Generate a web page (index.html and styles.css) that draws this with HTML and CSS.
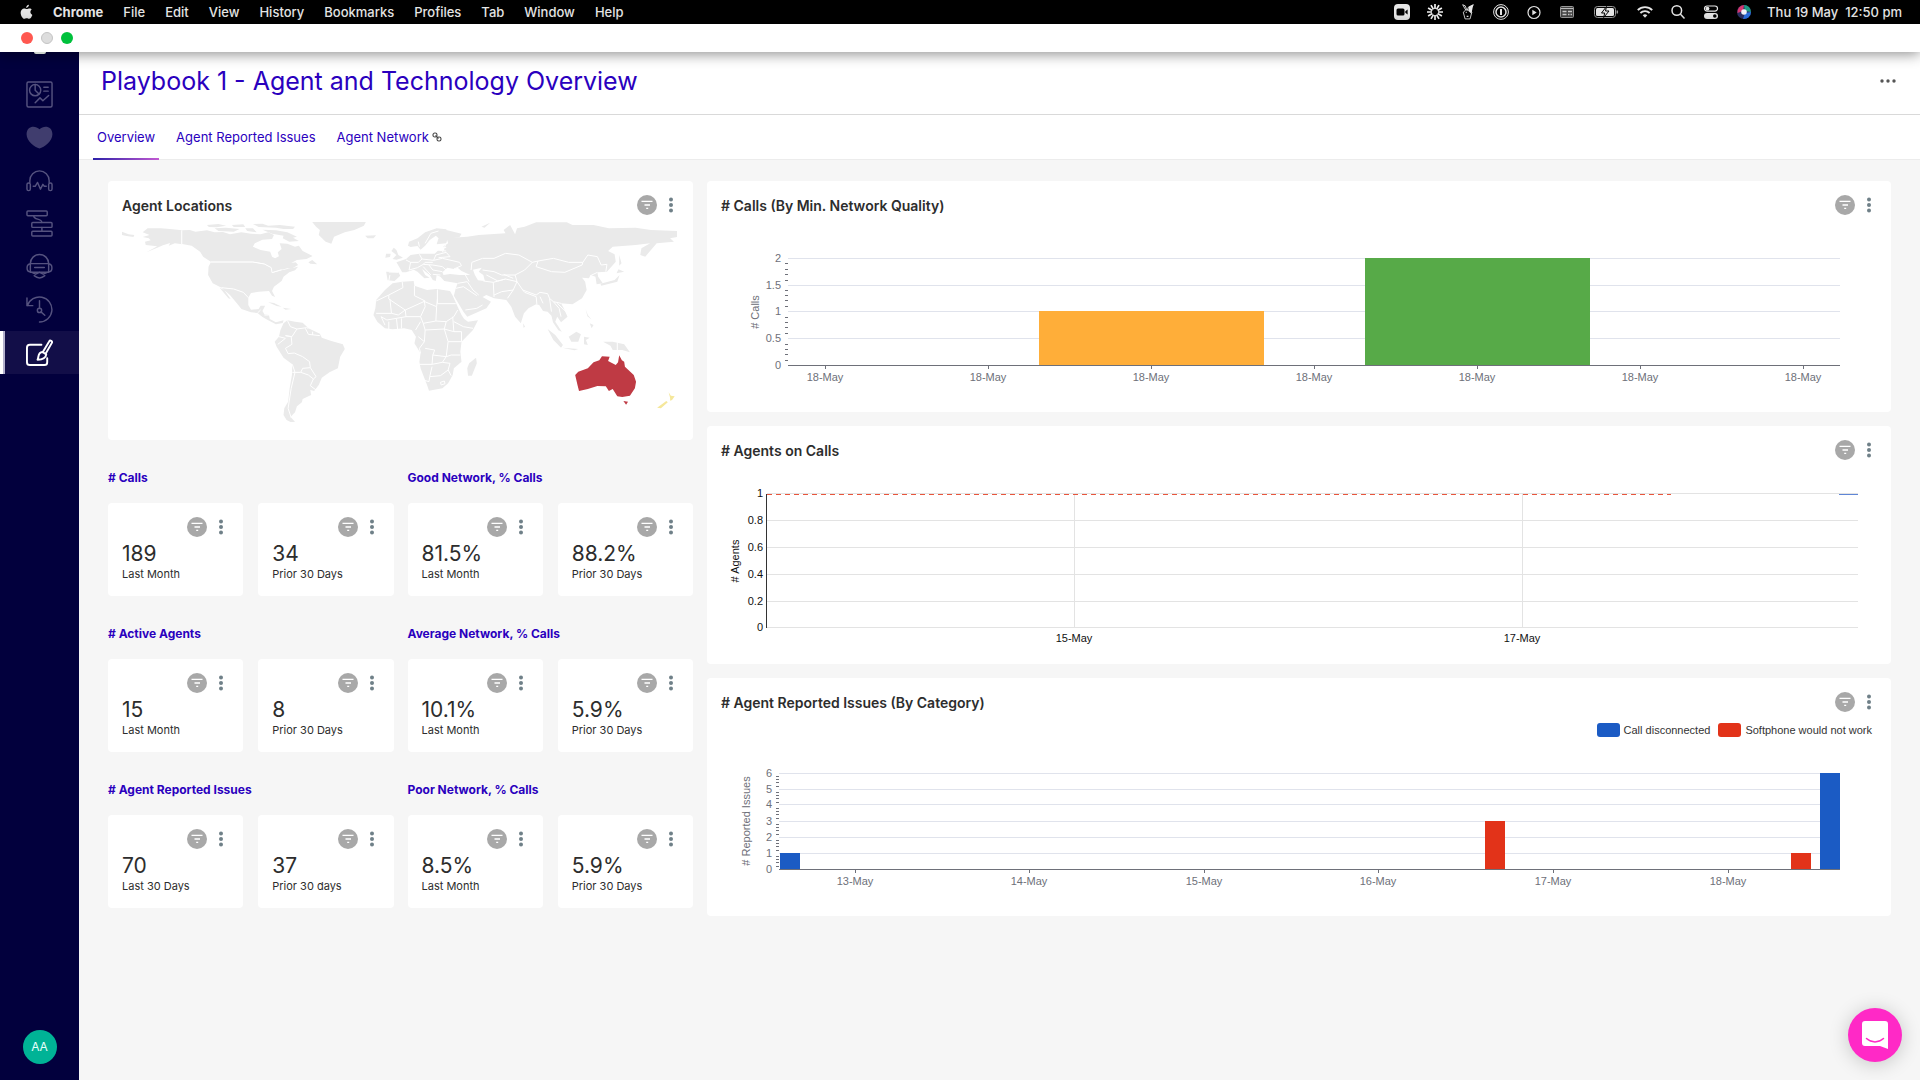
FILE: index.html
```html
<!DOCTYPE html>
<html lang="en">
<head>
<meta charset="utf-8">
<title>Playbook 1 - Agent and Technology Overview</title>
<meta name="viewport" content="width=device-width, initial-scale=1">
<link rel="stylesheet" href="styles.css">
</head>
<body>
<svg class="defs" aria-hidden="true">
  <symbol id="filter" viewBox="0 0 20 20"><circle cx="10" cy="10" r="10" fill="#a8a8a8"/><path d="M4.500 6.300h11M7.500 10h5.500M9.200 13.300h2" stroke="#fff" stroke-width="1.300"/></symbol>
  <symbol id="dots" viewBox="0 0 6 20"><g fill="#6f8088"><circle cx="3" cy="4.500" r="2"/><circle cx="3" cy="10" r="2"/><circle cx="3" cy="15.500" r="2"/></g></symbol>
</svg>

<header class="menubar">
  <svg class="apple" viewBox="0 0 14 16" aria-label="Apple"><path fill="#e6e6e6" d="M9.600.3c.1 1.700-1.300 3.200-2.900 3.300C6.500 2 8 .5 9.600.3zM12.700 5.400c-2.300 1.500-1.800 4.700.6 5.700-.7 1.900-2 4.300-3.500 4.300-1 0-1.400-.6-2.600-.6s-1.600.6-2.600.6C2.800 15.400.7 11.900.7 8.900c0-3 1.900-4.700 3.800-4.700 1.200 0 2 .7 2.800.7.900 0 1.800-.8 3.200-.8.900 0 1.700.5 2.200 1.300z"/></svg>
  <nav class="menus">
    <b>Chrome</b><span>File</span><span>Edit</span><span>View</span><span>History</span><span>Bookmarks</span><span>Profiles</span><span>Tab</span><span>Window</span><span>Help</span>
  </nav>
  <div class="status">
    <svg viewBox="0 0 16 16"><rect width="16" height="16" rx="4" fill="#e6e6e6"/><rect x="2.500" y="4.500" width="8" height="7" rx="1.500"/><path d="M11.300 7.200l2.300-1.700v5l-2.300-1.700z"/></svg>
    <svg viewBox="0 0 16 16"><path d="M8 0v5M8 11v5M0 8h5M11 8h5M4 1.100l2.500 4.300M9.500 10.600l2.500 4.300M12 1.100L9.500 5.400M6.500 10.600L4 14.900M1.100 4l4.300 2.500M10.600 9.500l4.300 2.500M1.100 12l4.300-2.500M10.600 6.500L14.900 4" stroke="#f0f0f0" stroke-width="1.700"/></svg>
    <svg viewBox="0 0 16 18"><path d="M2 .8l3.500 6-2.800 2.400 2 7.600h5.600l2-7.600-1.700-3L14 .8 8.500 3.500 7 7.500 4.800 2z" fill="none" stroke="#e6e6e6"/><path d="M14 .6L9 3l-.8 4.500L11.800 11z" fill="#e6e6e6"/><path d="M5.500 9.500h1M6.500 14h2" stroke="#e6e6e6" stroke-width="1.500"/></svg>
    <svg viewBox="0 0 16 16"><g fill="none" stroke="#e6e6e6"><circle cx="8" cy="8" r="7.400"/><circle cx="8" cy="8" r="5" stroke-width="1.500"/></g><path d="M8 5v6" stroke="#e6e6e6" stroke-width="2"/></svg>
    <svg viewBox="0 0 16 16"><circle cx="8" cy="8.500" r="6" fill="none" stroke="#e6e6e6" stroke-width="1.200"/><path d="M6.300 5.800l4.400 2.700-4.400 2.700z" fill="#e6e6e6"/></svg>
    <svg viewBox="0 0 16 16"><rect x="1.500" y="2.500" width="13" height="11" rx="1" fill="#444" stroke="#999"/><path d="M2 4.500h12" stroke="#bbb"/><path d="M3.500 7.500h4M3.500 10.500h4M9 7.500h4M9 10.500h1.500M11.500 10.500h1.500" stroke="#c8c8c8" stroke-width="1.600"/></svg>
    <svg class="battery" viewBox="0 0 28 16"><rect x="2.500" y="2.500" width="21" height="11" rx="3" fill="none" stroke="#999"/><rect x="4" y="4" width="18" height="8" rx="1.500" fill="#e6e6e6"/><path d="M14.500 2.500L9.500 9h3.200l-1 4.500L17 7h-3.500z" fill="#e6e6e6" stroke="#000"/><path d="M25.300 6.500v3" stroke="#999" stroke-width="1.500"/></svg>
    <svg viewBox="0 0 16 16"><g fill="none" stroke="#e6e6e6" stroke-width="1.900"><path d="M.8 6.100a10.300 10.300 0 0 1 14.400 0M3.400 9a6.600 6.600 0 0 1 9.200 0"/></g><path d="M5.700 11.300a3.300 3.300 0 0 1 4.600 0L8 13.700z" fill="#e6e6e6"/></svg>
    <svg viewBox="0 0 16 16"><g fill="none" stroke="#e6e6e6" stroke-width="1.500"><circle cx="6.800" cy="6.500" r="4.800"/><path d="M10.300 10l4.200 4.400"/></g></svg>
    <svg viewBox="0 0 16 16"><rect x="1.500" y="2" width="13" height="5.200" rx="2.600" fill="none" stroke="#e6e6e6" stroke-width="1.200"/><circle cx="4.500" cy="4.600" r="1.900" fill="#e6e6e6"/><rect x="1" y="9" width="14" height="6" rx="3" fill="#e6e6e6"/><circle cx="11.800" cy="12" r="1.800"/></svg>
    <svg viewBox="0 0 16 16"><circle cx="8" cy="8" r="7" fill="#2b2f63"/><path d="M1.500 9A7 7 0 0 1 8 1l-1 6z" fill="#d5366f"/><path d="M8 1a7 7 0 0 1 7 7L9 7z" fill="#1d9a83"/><path d="M15 8a7 7 0 0 1-8 7l2-6z" fill="#2b6fe0"/><circle cx="8" cy="8" r="2.800" fill="#f2f4fb"/></svg>
  </div>
  <time class="clock">Thu 19 May&nbsp; 12:50 pm</time>
</header>

<div class="titlebar">
  <button class="light red" aria-label="Close"></button><button class="light gray" aria-label="Minimise"></button><button class="light green" aria-label="Zoom"></button>
</div>

<div class="app">
  <aside class="sidebar">
    <span class="logo"></span>
    <nav class="side-nav">
      <a href="#" aria-label="Reports"><svg viewBox="0 0 28 28"><rect x="1" y="1" width="26" height="26" rx="1.500"/><circle cx="9.500" cy="9.500" r="5.800"/><path d="M9.500 3.700v5.800l4 4M18.500 6.500h4.500M18.500 10.500h4.500M9.500 22.500l5-5 3 3 6-5.500"/></svg></a>
      <a href="#" aria-label="Health"><svg viewBox="0 0 28 28"><path class="solid" d="M14 25.500C9 23.500.6 18 .6 10.500.6 2 9.500.8 14 5.500 18.500.8 27.400 2 27.400 10.500 27.400 18 19 23.500 14 25.500z"/></svg></a>
      <a href="#" aria-label="Calls"><svg viewBox="0 0 28 28"><path d="M4 16v-2a10 10 0 0 1 20 0v2"/><rect x="1" y="16.500" width="3.500" height="8" rx="1.700"/><rect x="23.500" y="16.500" width="3.500" height="8" rx="1.700"/><path d="M7.500 20h2l2.500-4 3 7 2.500-5 1.500 2h2"/></svg></a>
      <a href="#" aria-label="Flows"><svg viewBox="0 0 28 28"><rect x="1" y="1" width="21" height="5" rx="1"/><rect x="6" y="13" width="21" height="5" rx="1"/><rect x="6" y="22" width="21" height="5" rx="1"/><path d="M8 6c0 5 8 2 8.500 7M16.500 18v4"/></svg></a>
      <a href="#" aria-label="Agents"><svg viewBox="0 0 28 28"><path d="M4.500 11a9.500 9.500 0 0 1 19 0"/><rect x="4.500" y="11" width="19" height="9"/><path d="M9 15h10M4.500 11.500c-4.500 0-4.500 8 0 8M23.500 11.500c4.500 0 4.500 8 0 8M6 20l4 2 4-2 4 2 4-2M8.500 23.500c3.500 3 7.500 3 11 0"/></svg></a>
      <a href="#" aria-label="History"><svg viewBox="0 0 28 28"><path d="M1 2v8h6M1.500 10A13 13 0 1 1 14 27M14 5v8"/><circle cx="14" cy="15" r="2.200"/><path d="M15.500 16.500l4 3.500"/></svg></a>
      <a href="#" aria-label="Playbooks" class="active"><svg viewBox="0 0 28 28"><path d="M16 6H4a3 3 0 0 0-3 3v15a3 3 0 0 0 3 3h15a3 3 0 0 0 3-3v-4M17.500 13.500L24 2.500c1-1.800 3.800-.3 2.800 1.500L20.500 15M17 13.500c-5 .5-3.500 5-5 8 4.500 0 8.500-1 9-5.500z"/></svg></a>
    </nav>
    <span class="avatar">AA</span>
  </aside>

  <main class="main">
    <div class="page-head">
      <h1>Playbook 1 - Agent and Technology Overview</h1>
      <button class="more" aria-label="More"><svg viewBox="0 0 16 4"><g fill="#555"><circle cx="2" cy="2" r="1.700"/><circle cx="8" cy="2" r="1.700"/><circle cx="14" cy="2" r="1.700"/></g></svg></button>
    </div>
    <nav class="tabs">
      <a href="#" class="current">Overview</a>
      <a href="#">Agent Reported Issues</a>
      <a href="#">Agent Network <svg class="link" viewBox="0 0 10 10"><g fill="none" stroke="#444" stroke-width="1.100"><rect x="1" y="1" width="4" height="4" rx="1.800"/><rect x="5" y="5" width="4" height="4" rx="1.800"/><path d="M3.500 3.500l3 3"/></g></svg></a>
    </nav>

    <div class="board">
      <div class="left">
        <section class="card map-card">
          <div class="card-head"><h2>Agent Locations</h2><button aria-label="Filter"><svg class="f"><use href="#filter"/></svg></button><button aria-label="Options"><svg class="d"><use href="#dots"/></svg></button></div>
          <svg class="map" viewBox="58 141 1450 600" preserveAspectRatio="none" role="img" aria-label="World map with Australia and New Zealand highlighted">
            <g class="land">
              <path d="M58 170L75 178 90 180 88 186 70 183 58 180zM112 172L125 160 160 160 190 163 215 166V208L196 205 180 212 184 204 165 211 150 218 122 232 150 214 120 210 118 200 133 196 128 190 112 186 130 180z"/>
              <path d="M215 166L235 165 250 170 280 166 300 172 322 171 340 178 370 172 395 176 420 178 440 172 455 180 450 192 425 194 405 205 400 215 420 225 445 230 450 245 458 250 468 244 465 232 475 222 470 205 490 206 510 215 520 212 530 228 556 243 540 252 515 255 500 264 512 262 518 270 500 282 490 280 450 292 446 276 430 266 400 260 290 260 270 245 262 230 240 212 215 207z"/>
              <path d="M280 150L310 147 330 152 305 157 285 156zM300 160L330 158 365 162 350 170 310 168zM345 150L375 148 380 156 350 156zM380 160L400 160 410 172 385 168zM400 147L425 146 440 152 470 150 510 155 505 162 480 162 460 158 415 156zM425 164L460 166 490 172 515 185 505 188 520 198 495 200 478 190 480 182 450 176zM545 262L555 255 568 268 550 266z"/>
              <path d="M290 262H400L430 268 448 278 450 294 475 286 500 280 518 275 510 286 495 292 480 305 475 318 455 335 450 348 458 366 450 362 442 348 415 350 395 354 388 368 375 352 350 342 318 338 295 325 283 300 284 275z"/>
              <path d="M318 338L350 342 375 352 388 368 388 390 395 404 415 402 420 392 432 392 425 408 430 418 442 420 444 432 460 442 480 436 478 444 460 448 440 436 425 426 412 414 395 412 370 402 358 385 340 360zM313 338L325 345 342 372 336 370zM440 382L455 384 475 395 462 393zM478 398L500 402 485 404z"/>
              <path d="M555 141H695L690 152 665 165 640 172 612 185 605 206 590 200 572 180 575 165 565 155zM693 182L722 181 715 190 700 190z"/>
              <path d="M480 445L490 436 510 440 530 443 545 460 575 476 580 488 605 498 635 508 640 522 628 545 622 580 600 592 580 608 572 630 560 648 550 645 552 660 530 672 528 682 515 694 510 712 498 726 510 740 500 742 488 735 480 720 482 700 492 680 496 640 502 600 503 568 480 548 462 515 457 500 468 485 472 465z"/>
              <path d="M765 325L790 320 820 318 822 332 855 345 880 342 915 348 922 362 935 395 945 420 952 432 962 440 988 436 975 465 945 500 942 530 945 560 925 580 922 600 910 625 895 640 860 647 855 630 838 580 835 560 838 535 822 505 826 485 815 465 795 460 765 463 745 460 725 440 715 420 720 400 722 375 745 345zM983 548L985 565 972 602 962 602 960 580 965 565z"/>
              <path d="M748 290L780 292 785 302 770 318 752 316zM768 218L775 225 780 240 792 248 775 254 765 252 775 240 762 228zM748 236L760 236 758 246 746 248zM805 212L808 200 830 190 850 172 880 160 905 163 912 180 905 205 880 208 885 190 878 182 862 195 850 212 838 224 830 213 812 216z"/>
              <path d="M905 165L945 176 940 186 920 188 960 185 990 180 1020 178 1060 175 1055 165 1072 150 1085 178 1090 160 1110 155 1140 142H1220L1235 150 1290 150 1330 160 1400 158 1440 165 1508 168V186L1490 190 1500 200 1455 205 1440 225 1425 245 1412 240 1415 220 1438 205 1400 210 1340 215 1328 228 1345 238 1348 260 1325 290 1300 292 1302 305 1314 325 1298 328 1295 305 1282 300 1278 310 1260 308 1268 320 1272 345 1260 370 1235 388 1205 385 1212 400 1222 425 1205 442 1195 425 1190 440 1207 470 1198 466 1184 442 1180 422 1170 410 1158 408 1148 390 1140 388 1120 400 1108 415 1100 445 1085 425 1075 395 1062 375 1030 370 1010 360 1000 366 1022 380 1010 400 960 425 950 410 925 362 930 340 935 325 900 318 890 305 880 300 878 318 870 315 862 300 842 282 850 300 862 308 848 310 830 290 820 284 800 292 790 292 782 275 775 262 800 252 812 240 835 236 875 236 885 225 900 225 898 214 910 205 905 185z"/>
              <path d="M1355 283L1370 290 1350 295zM1358 300L1352 320 1310 332 1308 326 1345 315zM1357 240L1363 265 1357 272zM1170 462L1190 480 1210 510 1205 518 1185 495zM1208 518L1250 522 1240 526zM1225 485L1245 470 1257 478 1250 500 1232 500zM1265 485L1280 488 1270 495 1275 510 1265 508zM1269 402L1275 420 1285 434 1274 424zM1280 445L1290 450 1285 460zM1315 500L1340 500 1370 508 1385 532 1365 525 1340 525 1334 512zM1106 445L1111 455 1107 458zM997 155L1020 143 1005 158z"/>
            </g>
            <path class="sea" d="M895 292L908 278 925 282 935 278 945 288 968 300 940 300 915 297 898 300zM975 284L998 278 990 290 1002 300 1006 318 988 316 980 300z"/>
            <path class="borders" d="M214 166V208M290 261H400L430 267 448 278 450 293 475 284M318 338L350 342 375 352 388 368M412 414L420 405M430 420L442 420"/>
            <path class="borders" d="M490 436L498 455 515 462 502 485 485 482M515 462L540 458 545 460M537 460L545 478 575 482M556 470V480M468 485L485 490 465 508M500 485L502 508 485 520 492 536 508 534 530 545 548 560 550 578 565 605 558 612 545 600 525 592 503 592M503 568L510 592 500 640 492 700 500 728M550 578L530 580 525 592M558 612L550 632 565 645M485 482L500 485"/>
            <path class="borders" d="M790 320L792 338 755 360 722 378M755 360V372L798 405 850 378 822 362V332M882 343V386H930M882 372L880 395 845 378M758 372L762 415H722M762 415L780 420 798 405M798 405L800 425 775 430 750 435 735 425M800 425L838 425 850 395 848 380M838 425L845 445 878 438 880 395M825 465L838 440M878 438L905 440 925 425 935 405M905 440L900 462 925 470 922 425M925 440L950 455 975 460M845 445L850 465 900 462M850 465L848 500 835 520 838 535M848 500L832 485M850 520L875 525 870 540 905 545 910 500 900 462M910 500H945M925 470L945 470V500M870 540L868 568H835M868 568L895 562 905 545 918 540 942 540M868 575L862 605 860 620 845 615M862 605L890 602 910 585 915 565 895 562M910 585L918 602M775 430L778 462M755 440V463M788 430V460M735 425L745 450M890 622L900 618 902 626 892 630z"/>
            <path class="borders" d="M935 325L960 320 975 345 990 360M955 300L965 320M930 340L950 335 985 362M955 405L985 400 1000 390M1002 318L1028 322 1030 366M1028 322L1060 312 1090 320 1080 345 1050 350 1030 360M1080 345L1065 370M1090 320L1105 345 1140 360 1150 352 1170 356 1175 370 1185 380 1205 385M1105 345L1110 352 1140 365 1142 388M1150 365L1158 385M1175 370L1180 410M1185 380L1200 400 1205 425M1195 385L1218 410"/>
            <path class="borders" d="M970 285L972 262 1000 250 1030 250 1060 235 1095 240 1130 262 1145 258 1185 250 1225 262 1262 262 1275 240 1300 245 1310 270 1325 268 1322 290M1130 262L1110 285 1085 300 1090 320M1145 258L1140 275 1180 290 1215 292 1260 270 1262 262M1000 285L1030 290 1050 300 1085 300M1010 300L1040 318 1060 312M1055 298L1080 310M1282 302L1300 292"/>
            <path class="borders" d="M780 292L755 291M758 300L755 318M800 255L812 262 808 285 830 278 845 268 870 270 895 275 905 285M835 238L842 252 832 262 812 262M842 252L872 256 878 240M878 240L905 232 915 245 885 248M872 256L895 250 940 262 945 272 925 282M845 268L850 262 870 262M860 270L870 285 895 290M845 275L865 300M878 225L905 228M885 216L905 218M832 200L835 215M850 205L865 175 885 168M905 205L895 232M870 298L890 300"/>
            <path class="borders" d="M1352 502V525"/>
            <path fill="#bf3a44" d="M1242 600L1250 590 1275 580 1290 562 1305 556 1312 544 1332 545 1328 558 1348 570 1354 562 1357 541 1364 556 1370 560 1372 575 1395 600 1401 620 1398 640 1385 662 1365 666 1352 664 1340 642 1330 648 1322 634 1300 633 1275 642 1252 648 1248 630zM1368 678L1380 680 1375 689z"/>
            <path fill="#f5e79b" d="M1486 652L1492 662 1502 664 1495 675 1490 677 1490 668zM1480 678L1484 682 1466 700 1456 698z"/>
          </svg>
        </section>

        <div class="stats">
          <section class="group"><h3># Calls</h3><div class="pair">
            <article class="card stat"><div class="tools"><button aria-label="Filter"><svg class="f"><use href="#filter"/></svg></button><button aria-label="Options"><svg class="d"><use href="#dots"/></svg></button></div><strong>189</strong><span>Last Month</span></article>
            <article class="card stat"><div class="tools"><button aria-label="Filter"><svg class="f"><use href="#filter"/></svg></button><button aria-label="Options"><svg class="d"><use href="#dots"/></svg></button></div><strong>34</strong><span>Prior 30 Days</span></article>
          </div></section>
          <section class="group"><h3>Good Network, % Calls</h3><div class="pair">
            <article class="card stat"><div class="tools"><button aria-label="Filter"><svg class="f"><use href="#filter"/></svg></button><button aria-label="Options"><svg class="d"><use href="#dots"/></svg></button></div><strong>81.5%</strong><span>Last Month</span></article>
            <article class="card stat"><div class="tools"><button aria-label="Filter"><svg class="f"><use href="#filter"/></svg></button><button aria-label="Options"><svg class="d"><use href="#dots"/></svg></button></div><strong>88.2%</strong><span>Prior 30 Days</span></article>
          </div></section>
          <section class="group"><h3># Active Agents</h3><div class="pair">
            <article class="card stat"><div class="tools"><button aria-label="Filter"><svg class="f"><use href="#filter"/></svg></button><button aria-label="Options"><svg class="d"><use href="#dots"/></svg></button></div><strong>15</strong><span>Last Month</span></article>
            <article class="card stat"><div class="tools"><button aria-label="Filter"><svg class="f"><use href="#filter"/></svg></button><button aria-label="Options"><svg class="d"><use href="#dots"/></svg></button></div><strong>8</strong><span>Prior 30 Days</span></article>
          </div></section>
          <section class="group"><h3>Average Network, % Calls</h3><div class="pair">
            <article class="card stat"><div class="tools"><button aria-label="Filter"><svg class="f"><use href="#filter"/></svg></button><button aria-label="Options"><svg class="d"><use href="#dots"/></svg></button></div><strong>10.1%</strong><span>Last Month</span></article>
            <article class="card stat"><div class="tools"><button aria-label="Filter"><svg class="f"><use href="#filter"/></svg></button><button aria-label="Options"><svg class="d"><use href="#dots"/></svg></button></div><strong>5.9%</strong><span>Prior 30 Days</span></article>
          </div></section>
          <section class="group"><h3># Agent Reported Issues</h3><div class="pair">
            <article class="card stat"><div class="tools"><button aria-label="Filter"><svg class="f"><use href="#filter"/></svg></button><button aria-label="Options"><svg class="d"><use href="#dots"/></svg></button></div><strong>70</strong><span>Last 30 Days</span></article>
            <article class="card stat"><div class="tools"><button aria-label="Filter"><svg class="f"><use href="#filter"/></svg></button><button aria-label="Options"><svg class="d"><use href="#dots"/></svg></button></div><strong>37</strong><span>Prior 30 days</span></article>
          </div></section>
          <section class="group"><h3>Poor Network, % Calls</h3><div class="pair">
            <article class="card stat"><div class="tools"><button aria-label="Filter"><svg class="f"><use href="#filter"/></svg></button><button aria-label="Options"><svg class="d"><use href="#dots"/></svg></button></div><strong>8.5%</strong><span>Last Month</span></article>
            <article class="card stat"><div class="tools"><button aria-label="Filter"><svg class="f"><use href="#filter"/></svg></button><button aria-label="Options"><svg class="d"><use href="#dots"/></svg></button></div><strong>5.9%</strong><span>Prior 30 Days</span></article>
          </div></section>
        </div>
      </div>

      <div class="right">
        <section class="card">
          <div class="card-head"><h2># Calls (By Min. Network Quality)</h2><button aria-label="Filter"><svg class="f"><use href="#filter"/></svg></button><button aria-label="Options"><svg class="d"><use href="#dots"/></svg></button></div>
          <svg class="chart" viewBox="0 0 1184 190">
            <path class="grid" d="M81 36h1052M81 63h1052M81 89h1052M81 116h1052"/>
            <path class="tick" d="M78 41h3M78 47h3M78 52h3M78 58h3M78 68h3M78 73h3M78 78h3M78 84h3M78 95h3M78 100h3M78 105h3M78 111h3M78 122h3M78 127h3M78 132h3M78 138h3"/>
            <rect x="332" y="89" width="225" height="54" fill="#ffae39"/>
            <rect x="658" y="36" width="225" height="107" fill="#57aa48"/>
            <path class="axis" d="M81 143h1052M118 143v4M281 143v4M444 143v4M607 143v4M770 143v4M933 143v4M1096 143v4"/>
            <g class="y"><text x="74" y="40">2</text><text x="74" y="67">1.5</text><text x="74" y="93">1</text><text x="74" y="120">0.5</text><text x="74" y="147">0</text></g>
            <g class="x"><text x="118" y="159">18-May</text><text x="281" y="159">18-May</text><text x="444" y="159">18-May</text><text x="607" y="159">18-May</text><text x="770" y="159">18-May</text><text x="933" y="159">18-May</text><text x="1096" y="159">18-May</text>
            <text transform="translate(52 90) rotate(-90)"># Calls</text></g>
          </svg>
        </section>

        <section class="card">
          <div class="card-head"><h2># Agents on Calls</h2><button aria-label="Filter"><svg class="f"><use href="#filter"/></svg></button><button aria-label="Options"><svg class="d"><use href="#dots"/></svg></button></div>
          <svg class="chart dark" viewBox="0 0 1184 197">
            <path class="grid" d="M60 26h1091M60 53h1091M60 80h1091M60 107h1091M60 134h1091M60 160h1091M367 27v133M815 27v133"/>
            <path class="axis" d="M59 27v134"/>
            <path d="M60 27h904" fill="none" stroke="#e8553c" stroke-dasharray="5 4" shape-rendering="crispEdges"/>
            <path d="M1132 27h19" fill="none" stroke="#5f86d6" shape-rendering="crispEdges"/>
            <g class="y"><text x="56" y="30">1</text><text x="56" y="57">0.8</text><text x="56" y="84">0.6</text><text x="56" y="111">0.4</text><text x="56" y="138">0.2</text><text x="56" y="164">0</text></g>
            <g class="x"><text x="367" y="175">15-May</text><text x="815" y="175">17-May</text><text transform="translate(32 94) rotate(-90)"># Agents</text></g>
          </svg>
        </section>

        <section class="card">
          <div class="card-head"><h2># Agent Reported Issues (By Category)</h2><button aria-label="Filter"><svg class="f"><use href="#filter"/></svg></button><button aria-label="Options"><svg class="d"><use href="#dots"/></svg></button></div>
          <div class="legend"><i class="blue"></i><span>Call disconnected</span><i class="orange"></i><span>Softphone would not work</span></div>
          <svg class="chart" viewBox="0 0 1184 176">
            <path class="grid" d="M72 33h1061M72 49h1061M72 64h1061M72 81h1061M72 97h1061M72 113h1061"/>
            <path class="tick" d="M69 36h3M69 39h3M69 42h3M69 46h3M69 52h3M69 55h3M69 58h3M69 62h3M69 68h3M69 71h3M69 74h3M69 78h3M69 84h3M69 87h3M69 90h3M69 94h3M69 100h3M69 103h3M69 106h3M69 110h3M69 116h3M69 119h3M69 122h3M69 126h3"/>
            <g fill="#1b5bc4"><rect x="73" y="113" width="20" height="16"/><rect x="1113" y="33" width="20" height="96"/></g>
            <g fill="#e23319"><rect x="778" y="81" width="20" height="48"/><rect x="1084" y="113" width="20" height="16"/></g>
            <path class="axis" d="M72 129h1061M148 129v4M322 129v4M497 129v4M671 129v4M846 129v4M1021 129v4"/>
            <g class="y"><text x="65" y="37">6</text><text x="65" y="53">5</text><text x="65" y="68">4</text><text x="65" y="85">3</text><text x="65" y="101">2</text><text x="65" y="117">1</text><text x="65" y="133">0</text></g>
            <g class="x"><text x="148" y="145">13-May</text><text x="322" y="145">14-May</text><text x="497" y="145">15-May</text><text x="671" y="145">16-May</text><text x="846" y="145">17-May</text><text x="1021" y="145">18-May</text><text transform="translate(43 81) rotate(-90)"># Reported Issues</text></g>
          </svg>
        </section>
      </div>
    </div>
  </main>
</div>

<button class="chat" aria-label="Open chat"><svg viewBox="0 0 26 28"><path d="M3 0h20a3 3 0 0 1 3 3v25l-8-3H3a3 3 0 0 1-3-3V3a3 3 0 0 1 3-3z" fill="#fff"/><path d="M4.500 17.500c5 4.500 12 4.500 17 0" fill="none" stroke="#ff29c6" stroke-width="1.500" stroke-linecap="round"/></svg></button>
</body>
</html>
```
FILE: styles.css
```css
* { box-sizing: border-box; }
body {
  margin: 0;
  min-height: 100vh;
  display: flex;
  flex-direction: column;
  background: #f6f6f6;
  color: #2d2d2d;
  font-family: Inter, "Liberation Sans", sans-serif;
}
button { border: 0; padding: 0; background: none; display: block; }
a { text-decoration: none; }
h1, h2, h3 { margin: 0; }
svg { display: block; }
.defs { display: none; }

/* system menu bar */
.menubar {
  height: 24px;
  padding: 0 18px 0 20px;
  display: flex;
  align-items: center;
  background: #000;
  color: #e6e6e6;
  font-size: 13px;
  font-weight: 500;
  line-height: 24px;
  white-space: nowrap;
}
.apple { width: 13px; height: 16px; margin-right: 20px; }
.menus { display: flex; gap: 20px; flex: 1; }
.status { display: flex; gap: 17px; margin-right: 15px; }
.status svg { width: 16px; height: 16px; }
.status .battery { width: 28px; }

.titlebar {
  height: 28px;
  padding-left: 21px;
  display: flex;
  align-items: center;
  gap: 8px;
  background: #fff;
  position: relative;
  z-index: 2;
  box-shadow: 0 2px 14px rgba(0, 0, 0, .45);
}
.light { width: 12px; height: 12px; border-radius: 50%; }
.red { background: #ff5850; }
.gray { background: #ddd; border: 1px solid #c4c4c4; }
.green { background: #00c13c; }

.app { flex: 1; display: flex; }

/* sidebar */
.sidebar {
  width: 79px;
  flex: none;
  padding-bottom: 16px;
  display: flex;
  flex-direction: column;
  align-items: center;
  background: #02003d;
}
.logo { width: 12px; height: 2px; margin-bottom: 19px; border-radius: 0 0 6px 6px; background: #cfd6cf; z-index: 3; }
.side-nav { width: 100%; flex: 1; }
.side-nav a {
  height: 43px;
  display: flex;
  align-items: center;
  justify-content: center;
}
.side-nav svg { width: 27px; height: 27px; fill: none; stroke: #55527f; stroke-width: 1.5; stroke-linejoin: round; stroke-linecap: round; }
.side-nav .solid { fill: #403d6e; stroke: none; }
.side-nav .active { background: #120e48; box-shadow: inset 3px 0 #fff, inset 5px 0 #b3b0cc; }
.side-nav .active svg { stroke: #fff; stroke-width: 2; }
.avatar {
  width: 34px;
  height: 34px;
  border-radius: 50%;
  background: #00b396;
  color: #e6fffa;
  font-size: 12px;
  line-height: 34px;
  text-align: center;
}

/* page header */
.main { flex: 1; min-width: 0; }
.page-head {
  height: 63px;
  padding: 0 24px 0 22px;
  display: flex;
  align-items: center;
  justify-content: space-between;
  background: #fff;
  border-bottom: 1px solid #d9d9d9;
}
.page-head h1 { color: #2a00be; font-size: 25px; font-weight: 400; line-height: 32px; padding-bottom: 4px; }
.more svg { width: 16px; height: 4px; }
.more { padding-bottom: 5px; }
.tabs {
  height: 45px;
  padding-left: 14px;
  display: flex;
  gap: 13px;
  background: #fff;
  border-bottom: 1px solid #ececec;
}
.tabs a {
  height: 45px;
  padding: 0 4px 2px;
  display: flex;
  gap: 3px;
  align-items: center;
  color: #2a00be;
  font-size: 13px;
}
.tabs .current { padding-bottom: 0; border-bottom: 2px solid; border-image: linear-gradient(90deg, #2a1fa8, #c45ad2) 1; }
.link { width: 10px; height: 10px; }

/* dashboard */
.board {
  padding: 21px 29px 0;
  display: grid;
  grid-template-columns: 585fr 1184fr;
  gap: 14px;
  align-items: start;
}
.right { display: grid; gap: 14px; }
.card { background: #fff; border-radius: 4px; }
.card-head {
  height: 41px;
  padding: 14px 19px 0 14px;
  display: flex;
  align-items: flex-start;
  gap: 11px;
}
.card-head h2 { flex: 1; padding-top: 1px; font-size: 14px; font-weight: 600; line-height: 20px; }
.f { width: 20px; height: 20px; }
.d { width: 6px; height: 20px; }
.map-card { padding-bottom: 18px; }
.map { width: calc(100% - 30px); height: 200px; margin: 0 14px; }
.land { fill: #eaeaea; }
.sea { fill: #fff; }
.borders { fill: none; stroke: #fff; stroke-width: 1; vector-effect: non-scaling-stroke; }

.stats { display: grid; grid-template-columns: 1fr 1fr; column-gap: 14px; }
.group h3 { height: 63px; padding-top: 28px; color: #2a00be; font-size: 12px; font-weight: 700; line-height: 20px; white-space: nowrap; }
.pair { display: grid; grid-template-columns: 1fr 1fr; gap: 15px; }
.stat { height: 93px; padding: 14px 19px 0 14px; display: flex; flex-direction: column; }
.tools { display: flex; justify-content: flex-end; gap: 11px; }
.stat strong { margin-top: 5px; font-size: 21px; font-weight: 400; line-height: 24px; }
.stat span { font-size: 11px; line-height: 16px; }

/* charts */
.chart { width: 100%; height: auto; font-family: "Liberation Sans", Arial, sans-serif; font-size: 11px; fill: #6e7079; }
.grid, .tick, .axis { fill: none; stroke: #e0e3ec; shape-rendering: crispEdges; }
.tick, .axis { stroke: #6e7079; }
.x { text-anchor: middle; }
.y { text-anchor: end; }
.dark { fill: #111; }
.dark .grid { stroke: #e3e3e3; }
.dark .axis { stroke: #333; }
.legend {
  height: 21px;
  padding: 0 19px 0 0;
  display: flex;
  align-items: center;
  justify-content: flex-end;
  font: 11px/14px "Liberation Sans", Arial, sans-serif;
  color: #333;
}
.legend i { width: 23px; height: 14px; margin-right: 4px; border-radius: 3px; }
.legend span + i { margin-left: 8px; }
.blue { background: #1b5bc4; }
.orange { background: #e23319; }

.chat {
  position: fixed;
  right: 18px;
  bottom: 18px;
  width: 54px;
  height: 54px;
  border-radius: 50%;
  display: flex;
  align-items: center;
  justify-content: center;
  background: #ff29c6;
  box-shadow: 0 2px 20px rgba(0, 0, 0, .2);
}
.chat svg { width: 26px; height: 28px; }
```
